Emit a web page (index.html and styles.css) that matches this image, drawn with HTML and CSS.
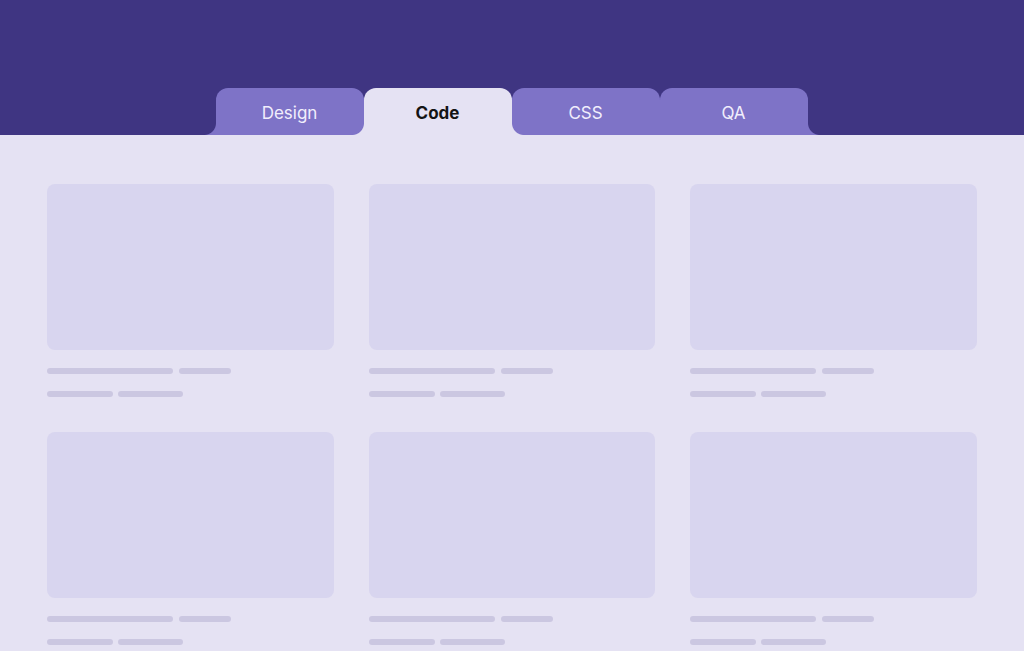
FILE: index.html
```html
<!DOCTYPE html>
<html lang="en">
<head>
<meta charset="utf-8">
<title>Tabs</title>
<link rel="stylesheet" href="styles.css">
</head>
<body>
<header class="header">
  <nav class="tabs">
    <div class="tab">Design</div>
    <div class="tab active">Code</div>
    <div class="tab">CSS</div>
    <div class="tab">QA</div>
  </nav>
</header>
<main class="grid">
  <div class="card"><div class="thumb"></div><div class="lines"><div class="row"><span class="bar w126"></span><span class="bar w52"></span></div><div class="row second"><span class="bar w66"></span><span class="bar w65"></span></div></div></div>
  <div class="card"><div class="thumb"></div><div class="lines"><div class="row"><span class="bar w126"></span><span class="bar w52"></span></div><div class="row second"><span class="bar w66"></span><span class="bar w65"></span></div></div></div>
  <div class="card"><div class="thumb"></div><div class="lines"><div class="row"><span class="bar w126"></span><span class="bar w52"></span></div><div class="row second"><span class="bar w66"></span><span class="bar w65"></span></div></div></div>
  <div class="card"><div class="thumb"></div><div class="lines"><div class="row"><span class="bar w126"></span><span class="bar w52"></span></div><div class="row second"><span class="bar w66"></span><span class="bar w65"></span></div></div></div>
  <div class="card"><div class="thumb"></div><div class="lines"><div class="row"><span class="bar w126"></span><span class="bar w52"></span></div><div class="row second"><span class="bar w66"></span><span class="bar w65"></span></div></div></div>
  <div class="card"><div class="thumb"></div><div class="lines"><div class="row"><span class="bar w126"></span><span class="bar w52"></span></div><div class="row second"><span class="bar w66"></span><span class="bar w65"></span></div></div></div>
</main>
</body>
</html>
```
FILE: styles.css
```css
* { box-sizing: border-box; }
html, body { margin: 0; padding: 0; }
body {
  background: #e5e2f3;
  font-family: Inter, "Noto Sans", sans-serif;
  width: 1024px;
  height: 651px;
  overflow: hidden;
}
.header {
  background: #3f3582;
  height: 135px;
  display: flex;
  align-items: flex-end;
  justify-content: center;
  padding-right: 1px;
}
.tabs {
  display: flex;
}
.tab {
  position: relative;
  width: 148px;
  height: 47px;
  background: #7e73c7;
  color: #f1eefc;
  border-radius: 12px 12px 0 0;
  display: flex;
  align-items: center;
  justify-content: center;
  font-size: 17px;
  font-weight: 400;
  padding-top: 2px;
}
.tab::before,
.tab::after {
  content: "";
  position: absolute;
  bottom: 0;
  width: 12px;
  height: 12px;
}
.tab::before {
  left: -12px;
  background: radial-gradient(circle at 0 0, transparent 11.5px, #7e73c7 12.5px);
}
.tab::after {
  right: -12px;
  background: radial-gradient(circle at 100% 0, transparent 11.5px, #7e73c7 12.5px);
}
.tab.active {
  background: #e5e2f3;
  color: #141414;
  font-weight: 700;
  z-index: 2;
}
.tab.active::before {
  background: radial-gradient(circle at 0 0, transparent 11.5px, #e5e2f3 12.5px);
}
.tab.active::after {
  background: radial-gradient(circle at 100% 0, transparent 11.5px, #e5e2f3 12.5px);
}
.grid {
  display: grid;
  grid-template-columns: repeat(3, 1fr);
  gap: 35px;
  padding: 49px 47px 0;
}
.thumb {
  height: 166px;
  background: #d8d5ef;
  border-radius: 8px;
}
.lines {
  display: flex;
  flex-direction: column;
  gap: 17px;
  padding-top: 18px;
}
.row {
  display: flex;
  gap: 6px;
}
.row.second {
  gap: 5px;
}
.bar {
  display: block;
  height: 6px;
  border-radius: 3px;
  background: #cbc7e1;
}
.w126 { width: 126px; }
.w52 { width: 52px; }
.w66 { width: 66px; }
.w65 { width: 65px; }
```
